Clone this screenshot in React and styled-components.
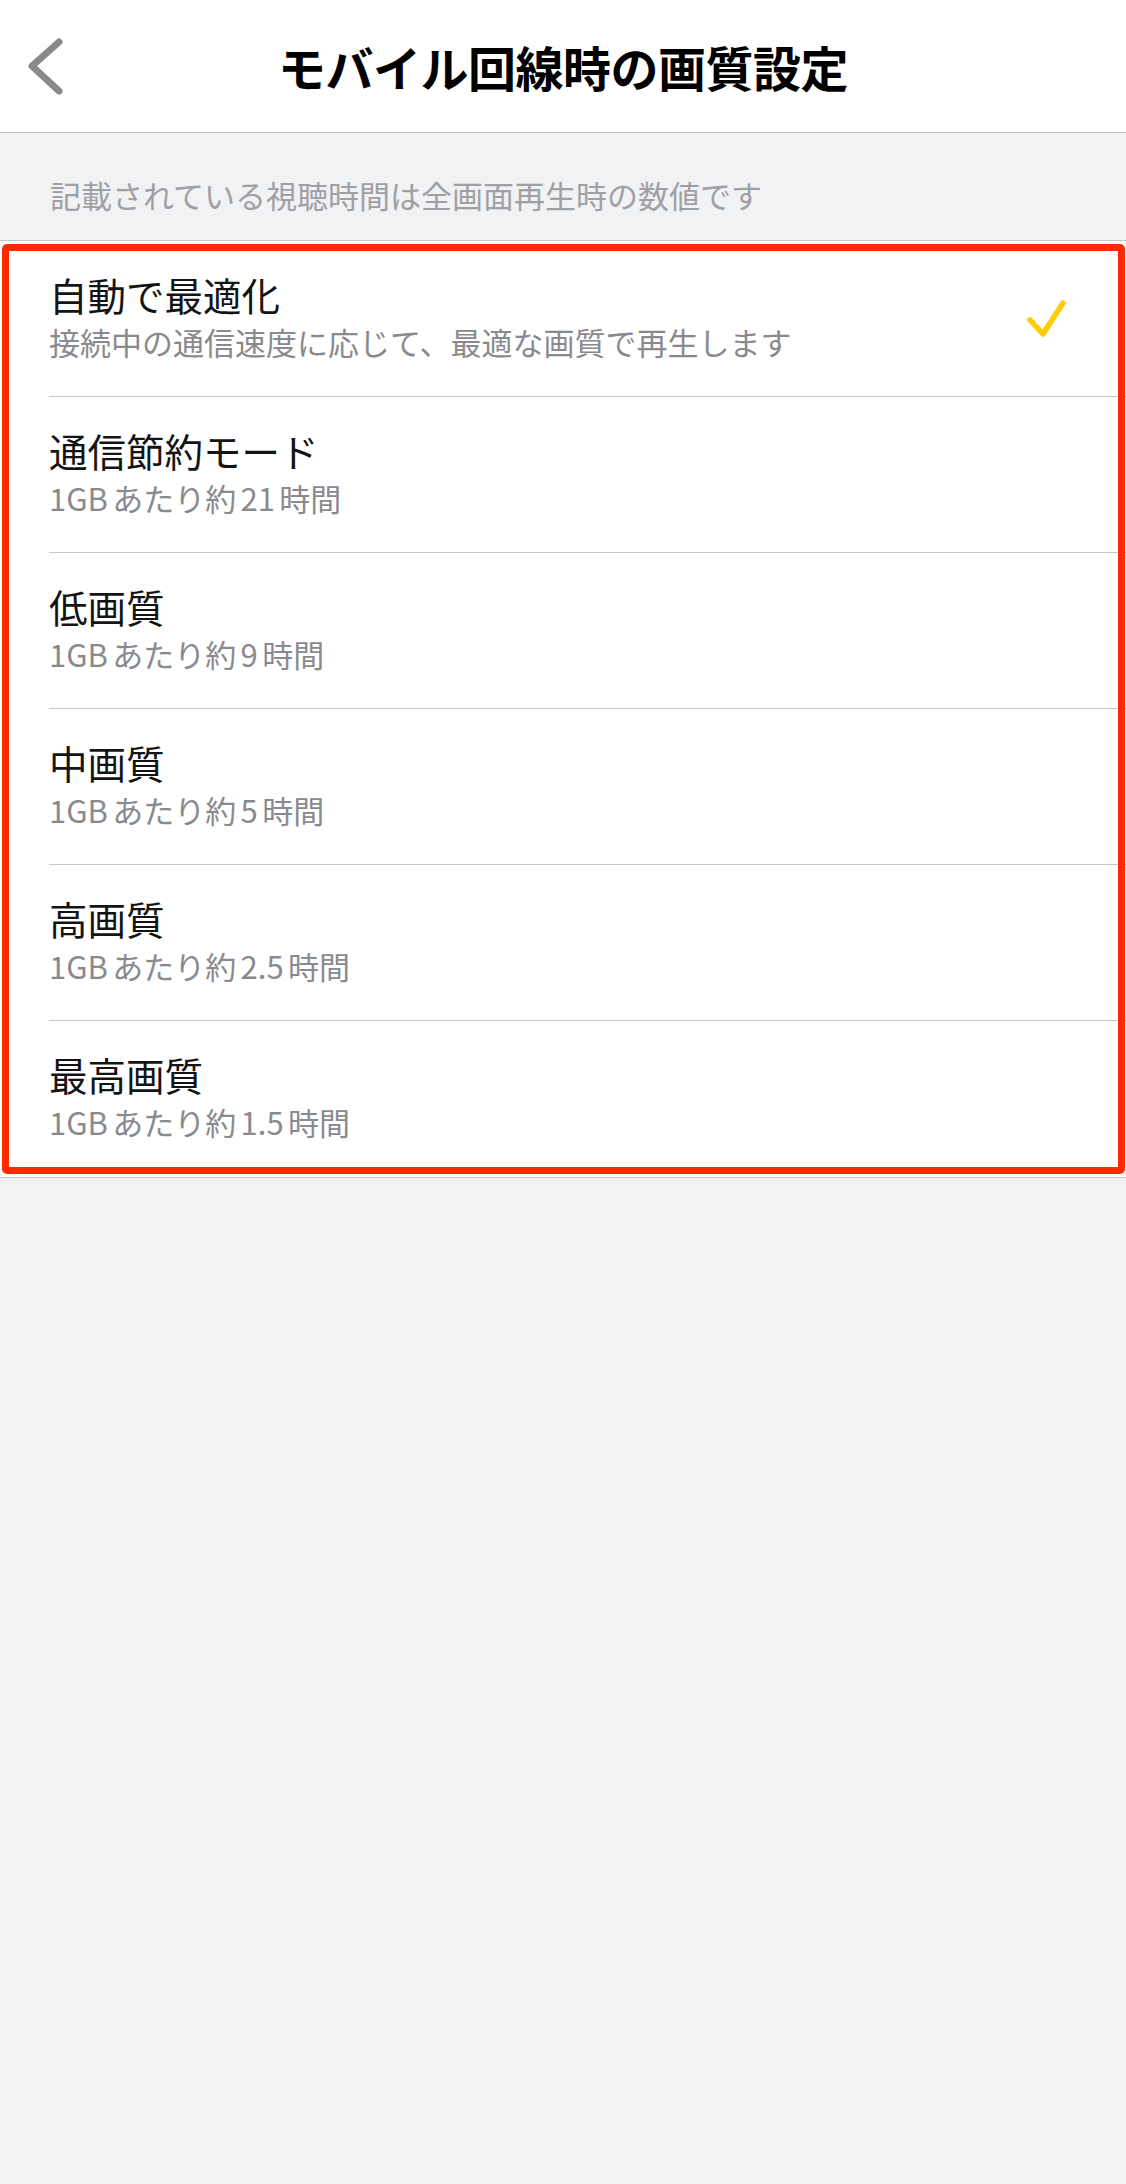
import React from 'react';
import styled, { createGlobalStyle } from 'styled-components';

const Global = createGlobalStyle`
  html, body {
    margin: 0;
    padding: 0;
    background: #f1f2f4;
  }
  body {
    font-family: "Noto Sans CJK JP", "Noto Sans", sans-serif;
    -webkit-font-smoothing: antialiased;
  }
`

const Page = styled.div`
  width: 1126px;
  min-height: 2184px;
  background: #f1f2f4;
`

const Header = styled.header`
  height: 132px;
  background: #ffffff;
  border-bottom: 1px solid #bdbdbf;
  display: grid;
  grid-template-columns: 1fr auto 1fr;
  align-items: center;
`

const BackButton = styled.button`
  justify-self: start;
  margin-left: 26px;
  padding: 0;
  border: none;
  background: none;
  width: 40px;
  height: 60px;
  display: flex;
`

const Title = styled.h1`
  margin: 0;
  font-size: 48px;
  line-height: 60px;
  font-weight: 700;
  color: #000000;
  letter-spacing: -0.5px;
`

const Notice = styled.p`
  margin: 0;
  box-sizing: border-box;
  height: 108px;
  padding: 45px 0 0 50px;
  font-size: 31px;
  line-height: 34px;
  color: #a0a0a4;
  border-bottom: 1px solid #c8c8cc;
`

const List = styled.ul`
  position: relative;
  margin: 0;
  padding: 0;
  list-style: none;
  background: #ffffff;
  border-bottom: 1px solid #c8c8cc;
`

const Highlight = styled.div`
  position: absolute;
  top: 3px;
  left: 2px;
  right: 1px;
  bottom: 3px;
  border: 7px solid #ff2a00;
  border-radius: 5px;
  pointer-events: none;
`

const Row = styled.li`
  padding-left: 49px;
`

const RowInner = styled.div`
  box-sizing: border-box;
  height: 156px;
  display: flex;
  align-items: center;
  padding-right: 58px;
  border-bottom: ${({ last }) => (last ? 'none' : '1px solid #c8c8cc')};
`

const Texts = styled.div`
  flex: 1;
  display: flex;
  flex-direction: column;
  margin-bottom: 6px;
`

const RowTitle = styled.div`
  font-size: 38.5px;
  line-height: 44px;
  color: #141414;
`

const RowSub = styled.div`
  margin-top: 8px;
  font-size: 31px;
  line-height: 36px;
  color: #8a8a8e;
`

const Num = styled.span`
  margin: 0 ${({ first }) => (first ? '0.14em 0 0' : '0.14em')};
`

const Check = styled.svg`
  width: 44px;
  height: 44px;
  flex: none;
`

const options = [
  { title: '自動で最適化', sub: '接続中の通信速度に応じて、最適な画質で再生します', checked: true },
  { title: '通信節約モード', sub: '1GBあたり約21時間' },
  { title: '低画質', sub: '1GBあたり約9時間' },
  { title: '中画質', sub: '1GBあたり約5時間' },
  { title: '高画質', sub: '1GBあたり約2.5時間' },
  { title: '最高画質', sub: '1GBあたり約1.5時間' },
]

// 数字・英字の前後に少し隙間を入れる
function spaced(text) {
  return text.split(/([0-9A-Z.]+)/).map((part, i) =>
    /^[0-9A-Z.]+$/.test(part) ? <Num key={i} first={i === 1 && text.startsWith(part)}>{part}</Num> : part
  )
}

export default function App() {
  return (
    <Page>
      <Global />
      <Header>
        <BackButton aria-label="戻る">
          <svg width="40" height="60" viewBox="0 0 40 60">
            <path d="M33 6 L6 30 L33 55" fill="none" stroke="#8b888b" strokeWidth="7" strokeLinecap="round" strokeLinejoin="round" />
          </svg>
        </BackButton>
        <Title>モバイル回線時の画質設定</Title>
        <div />
      </Header>

      <Notice>記載されている視聴時間は全画面再生時の数値です</Notice>

      <List>
        {options.map((o, i) => (
          <Row key={o.title}>
            <RowInner last={i === options.length - 1}>
              <Texts>
                <RowTitle>{o.title}</RowTitle>
                <RowSub>{o.checked ? o.sub : spaced(o.sub)}</RowSub>
              </Texts>
              {o.checked && (
                <Check viewBox="0 0 44 44">
                  <path d="M6 23 L19 37 L39 6" fill="none" stroke="#ffcc00" strokeWidth="5.5" strokeLinecap="round" strokeLinejoin="round" />
                </Check>
              )}
            </RowInner>
          </Row>
        ))}
        <Highlight />
      </List>
    </Page>
  )
}
